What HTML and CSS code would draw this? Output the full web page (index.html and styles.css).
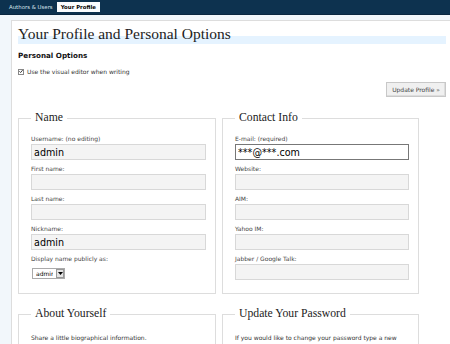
FILE: index.html
```html
<!DOCTYPE html>
<html>
<head>
  <meta charset="utf-8">
  <title>Your Profile and Personal Options</title>
  <link rel="stylesheet" href="styles.css">
</head>
<body>
  <!-- submenu -->
  <ul class="submenu">
    <li><a href="#">Authors &amp; Users</a></li>
    <li class="current"><a href="#">Your Profile</a></li>
  </ul>

  <div class="wrap">
    <h2 class="page-title">Your Profile and Personal Options</h2>

    <h3 class="section-title">Personal Options</h3>
    <p class="option-row">
      <label>
        <span class="check">
          <svg width="5" height="5" viewBox="0 0 5 5"><path d="M0.5 2.3L2 3.8L4.5 0.8" fill="none" stroke="#222" stroke-width="1.1"/></svg>
        </span>
        Use the visual editor when writing
      </label>
    </p>

    <p class="submit">
      <button type="button" class="button">Update Profile &raquo;</button>
    </p>

    <div class="fields">
      <fieldset class="box">
        <legend>Name</legend>
        <p class="field">
          <label>Username: (no editing)</label>
          <input type="text" class="text big" value="admin" disabled>
        </p>
        <p class="field">
          <label>First name:</label>
          <input type="text" class="text">
        </p>
        <p class="field">
          <label>Last name:</label>
          <input type="text" class="text">
        </p>
        <p class="field">
          <label>Nickname:</label>
          <input type="text" class="text big" value="admin">
        </p>
        <p class="field">
          <label>Display name publicly as:</label>
          <span class="select">
            <select class="select-box"><option>admin</option></select>
            <span class="select-arrow">
              <svg width="5" height="3" viewBox="0 0 5 3"><path d="M0 0h5L2.5 3z" fill="#000"/></svg>
            </span>
          </span>
        </p>
      </fieldset>

      <fieldset class="box">
        <legend>Contact Info</legend>
        <p class="field">
          <label>E-mail: (required)</label>
          <input type="text" class="text big focus" value="***@***.com">
        </p>
        <p class="field">
          <label>Website:</label>
          <input type="text" class="text">
        </p>
        <p class="field">
          <label>AIM:</label>
          <input type="text" class="text">
        </p>
        <p class="field">
          <label>Yahoo IM:</label>
          <input type="text" class="text">
        </p>
        <p class="field">
          <label>Jabber / Google Talk:</label>
          <input type="text" class="text">
        </p>
      </fieldset>

      <fieldset class="box">
        <legend>About Yourself</legend>
        <p class="note">Share a little biographical information.</p>
      </fieldset>

      <fieldset class="box">
        <legend>Update Your Password</legend>
        <p class="note">If you would like to change your password type a new one twice below. Otherwise leave this blank.</p>
      </fieldset>
    </div>
  </div>
</body>
</html>
```

FILE: styles.css
```css
/* reset */
* {
  margin: 0;
  padding: 0;
  box-sizing: border-box;
}

html {
  overflow: hidden;
}

body {
  background: #f2f7fb;
  font-family: "DejaVu Sans", Verdana, sans-serif;
  font-size: 6px;
  color: #333;
  overflow: hidden;
}

/* submenu bar */
.submenu {
  list-style: none;
  display: flex;
  height: 12px;
  padding: 2px 0 0 6px;
  background: #0d324f;
  border-bottom: 1px solid #0a2740;
  box-sizing: content-box;
}

.submenu li a {
  display: block;
  height: 10px;
  padding: 0 4px 0 3px;
  font-size: 5.4px;
  line-height: 10px;
  color: #d6e2ec;
  text-decoration: none;
}

.submenu li.current a {
  background: #f9fcfe;
  color: #000;
  font-weight: bold;
  padding: 0 4px;
}

/* main panel */
.wrap {
  width: 442px;
  margin: 5px 0 0 11px;
  padding: 0 6px 20px;
  background: #fff;
  border: 1px solid #ddd;
}

.page-title {
  margin-top: 11px;
  font-family: "Liberation Serif", "Times New Roman", serif;
  font-size: 15.5px;
  font-weight: normal;
  line-height: 4px;
  color: #222;
  border-bottom: 8px solid #e5f3ff;
}

.section-title {
  margin-top: 7px;
  font-size: 7.2px;
  line-height: 9px;
  font-weight: bold;
  color: #111;
}

.option-row {
  margin-top: 7px;
  line-height: 9px;
  color: #333;
}

.option-row label {
  display: flex;
  align-items: center;
  gap: 3px;
}

.check {
  display: flex;
  align-items: center;
  justify-content: center;
  width: 6px;
  height: 6px;
  background: #fff;
  border: 1px solid #888;
}

/* update button */
.submit {
  margin-top: 6px;
  display: flex;
  justify-content: flex-end;
}

.button {
  height: 15px;
  padding: 0 5px;
  font-family: "DejaVu Sans", Verdana, sans-serif;
  font-size: 6px;
  color: #444;
  background: #f0f0f0;
  border: 1px solid #c8c8c8;
  box-shadow: inset -1px -1px 0 #ddd;
}

/* fieldsets */
.fields {
  margin-top: 15px;
  display: grid;
  grid-template-columns: 198px 197px;
  column-gap: 6px;
  row-gap: 14px;
}

.box {
  border: 1px solid #ddd;
  padding: 11px 9px 13px 12px;
}

.box legend {
  padding: 0 4px;
  font-family: "Liberation Serif", "Times New Roman", serif;
  font-size: 11.7px;
  line-height: 12px;
  color: #222;
}

.field {
  margin-bottom: 5px;
}

.field:last-child {
  margin-bottom: 0;
}

.field label {
  display: block;
  line-height: 8px;
  margin-bottom: 1px;
  color: #444;
}

.text {
  display: block;
  width: 100%;
  height: 16px;
  padding: 0 2px;
  font-family: "DejaVu Sans", Verdana, sans-serif;
  font-size: 6px;
  color: #000;
  background: #f4f4f4;
  border: 1px solid #d8d8d8;
  outline: none;
}

.text.big {
  font-size: 9.6px;
}

.text.focus {
  background: #fff;
  border-color: #777;
}

.select {
  display: inline-flex;
  align-items: center;
  height: 11px;
  margin: 4px 0 0 1px;
  border: 1px solid #aaa;
  background: #fff;
}

.select-box {
  appearance: none;
  -webkit-appearance: none;
  border: none;
  background: transparent;
  font-family: "DejaVu Sans", Verdana, sans-serif;
  font-size: 6px;
  color: #000;
  padding: 0 3px;
  width: 23px;
  outline: none;
}

.select-arrow {
  display: flex;
  align-items: center;
  justify-content: center;
  width: 8px;
  height: 9px;
  background: #e4e4e4;
  border: 1px solid #999;
}

.note {
  margin-top: 2px;
  line-height: 9px;
  color: #333;
}
```
